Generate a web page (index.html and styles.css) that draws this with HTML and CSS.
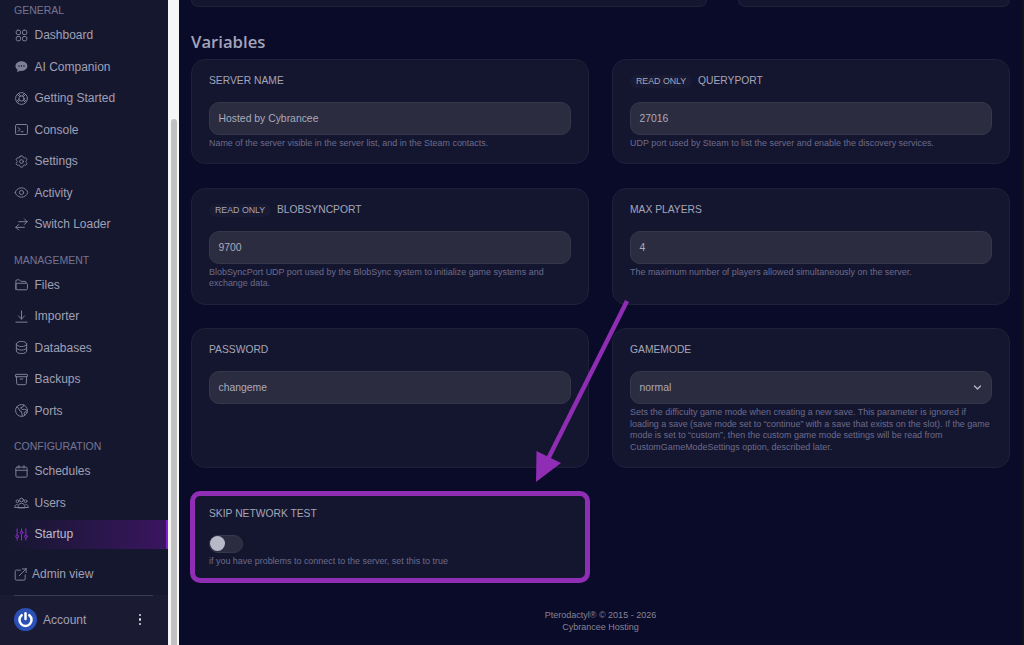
FILE: index.html
```html
<!DOCTYPE html>
<html lang="en">
<head>
    <meta charset="UTF-8">
    <meta name="viewport" content="width=device-width, initial-scale=1.0">
    <title>Startup - Cybrancee Hosting</title>
    <link rel="stylesheet" href="styles.css">
</head>
<body>
    <aside class="sidebar">
        <nav class="nav">
            <div class="nav-title">General</div>
            <div class="nav-group">
                <a class="nav-item"><svg class="icon" viewBox="0 0 24 24"><rect x="3.5" y="3.5" width="7" height="7" rx="2.6"/><rect x="13.5" y="3.5" width="7" height="7" rx="2.6"/><rect x="3.5" y="13.5" width="7" height="7" rx="2.6"/><rect x="13.5" y="13.5" width="7" height="7" rx="2.6"/></svg>Dashboard</a>
                <a class="nav-item"><svg class="icon" viewBox="0 0 24 24"><path class="fill" d="M12 3.5c5.2 0 9.5 3.4 9.5 7.8s-4.300 7.800-9.500 7.800c-.9 0-1.800-.1-2.600-.3-1.200 1-2.900 1.700-5 1.700.8-1 1.300-2.200 1.300-3.400-2.100-1.400-3.400-3.500-3.400-5.800 0-4.400 4.500-7.800 9.700-7.800Z"/><circle class="hole" cx="8" cy="11.300" r="1.200"/><circle class="hole" cx="12" cy="11.300" r="1.200"/><circle class="hole" cx="16" cy="11.300" r="1.200"/></svg>AI Companion</a>
                <a class="nav-item"><svg class="icon" viewBox="0 0 24 24"><circle cx="12" cy="12" r="9.500"/><circle cx="12" cy="12" r="4.200"/><path d="M5.300 5.300 9 9M18.700 5.300 15 9M5.300 18.700 9 15M18.700 18.700 15 15M8 4.500l2.600 3.500M16 4.500 13.400 8M4.500 16 8 13.400M19.500 16 16 13.400"/></svg>Getting Started</a>
                <a class="nav-item"><svg class="icon" viewBox="0 0 24 24"><rect x="2.500" y="4" width="19" height="16" rx="1.800"/><path d="m6.500 9 3.500 3-3.500 3M11.500 15.500h3"/></svg>Console</a>
                <a class="nav-item"><svg class="icon" viewBox="0 0 24 24"><path d="M9.594 3.940c.09-.542.56-.94 1.110-.94h2.593c.55 0 1.020.398 1.110.94l.213 1.281c.063.374.313.686.645.870.074.04.147.083.22.127.325.196.72.257 1.075.124l1.217-.456a1.125 1.125 0 0 1 1.370.49l1.296 2.247a1.125 1.125 0 0 1-.26 1.431l-1.003.827c-.293.241-.438.613-.43.992a7.723 7.723 0 0 1 0 .255c-.008.378.137.75.43.991l1.004.827c.424.35.534.955.26 1.430l-1.298 2.247a1.125 1.125 0 0 1-1.369.491l-1.217-.456c-.355-.133-.75-.072-1.076.124a6.470 6.470 0 0 1-.22.128c-.331.183-.581.495-.644.869l-.213 1.281c-.09.543-.56.94-1.110.94h-2.594c-.55 0-1.019-.398-1.110-.94l-.213-1.281c-.062-.374-.312-.686-.644-.87a6.520 6.520 0 0 1-.22-.127c-.325-.196-.72-.257-1.076-.124l-1.217.456a1.125 1.125 0 0 1-1.369-.49l-1.297-2.247a1.125 1.125 0 0 1 .26-1.431l1.004-.827c.292-.24.437-.613.43-.991a6.932 6.932 0 0 1 0-.255c.007-.38-.138-.751-.43-.992l-1.004-.827a1.125 1.125 0 0 1-.26-1.430l1.297-2.247a1.125 1.125 0 0 1 1.370-.491l1.216.456c.356.133.751.072 1.076-.124.072-.044.146-.086.22-.128.332-.183.582-.495.644-.869l.214-1.280Z"/><circle cx="12" cy="12" r="3"/></svg>Settings</a>
                <a class="nav-item"><svg class="icon" viewBox="0 0 24 24"><path d="M2.036 12.322a1.012 1.012 0 0 1 0-.639C3.423 7.510 7.360 4.500 12 4.500c4.638 0 8.573 3.007 9.963 7.178.07.207.07.431 0 .639C20.577 16.490 16.640 19.500 12 19.500c-4.638 0-8.573-3.007-9.963-7.178Z"/><circle cx="12" cy="12" r="3.400"/></svg>Activity</a>
                <a class="nav-item"><svg class="icon" viewBox="0 0 24 24"><path d="M7.500 21 3 16.500m0 0L7.500 12M3 16.500h13.500m0-13.500L21 7.500m0 0L16.500 12M21 7.500H7.500"/></svg>Switch Loader</a>
            </div>
            <div class="nav-title">Management</div>
            <div class="nav-group">
                <a class="nav-item"><svg class="icon" viewBox="0 0 24 24"><path d="M3 20V6.500A2 2 0 0 1 5 4.500h3.500l2.500 2.500h6.500a2 2 0 0 1 2 2"/><path d="M3 12a2 2 0 0 1 2-2h14.500a2 2 0 0 1 2 2v6.500a2 2 0 0 1-2 2H5a2 2 0 0 1-2-2Z"/></svg>Files</a>
                <a class="nav-item"><svg class="icon" viewBox="0 0 24 24"><path d="M12 3v13m0 0-5-5m5 5 5-5M3 21h18"/></svg>Importer</a>
                <a class="nav-item"><svg class="icon" viewBox="0 0 24 24"><path d="M20.250 6.375c0 2.278-3.694 4.125-8.250 4.125S3.750 8.653 3.750 6.375m16.500 0c0-2.278-3.694-4.125-8.250-4.125S3.750 4.097 3.750 6.375m16.500 0v11.250c0 2.278-3.694 4.125-8.250 4.125s-8.250-1.847-8.250-4.125V6.375m16.500 5.625c0 2.278-3.694 4.125-8.250 4.125S3.750 14.278 3.750 12"/></svg>Databases</a>
                <a class="nav-item"><svg class="icon" viewBox="0 0 24 24"><path d="m20.250 7.500-.625 10.632a2.250 2.250 0 0 1-2.247 2.118H6.622a2.250 2.250 0 0 1-2.247-2.118L3.750 7.500M10 11.250h4M3.375 7.500h17.250c.621 0 1.125-.504 1.125-1.125v-1.500c0-.621-.504-1.125-1.125-1.125H3.375c-.621 0-1.125.504-1.125 1.125v1.500c0 .621.504 1.125 1.125 1.125Z"/></svg>Backups</a>
                <a class="nav-item"><svg class="icon" viewBox="0 0 24 24"><circle cx="12" cy="12" r="9.500"/><path d="M4.500 6.500 8 9l1 3.500 3 1 .5 3.500 1 4.300M15.500 3.200l-1.500 3.300-3.500 1 2.500 3 3.500-.5 4 1.500M21 15l-3.500-1-1.500 2 1 3.500"/></svg>Ports</a>
            </div>
            <div class="nav-title">Configuration</div>
            <div class="nav-group">
                <a class="nav-item"><svg class="icon" viewBox="0 0 24 24"><rect x="3" y="5" width="18" height="16" rx="2"/><path d="M3 10h18M8 2.500V6.500M16 2.500V6.500"/></svg>Schedules</a>
                <a class="nav-item"><svg class="icon" viewBox="0 0 24 24"><circle cx="12" cy="8" r="3"/><circle cx="5.500" cy="10" r="2.200"/><circle cx="18.500" cy="10" r="2.200"/><path d="M6.500 20v-1.500c0-3 2.400-5.200 5.500-5.200s5.500 2.200 5.500 5.200V20ZM1.500 20v-1.500c0-2 1.500-3.500 3.500-3.500M22.500 20v-1.500c0-2-1.500-3.500-3.500-3.500M1.500 20h21"/></svg>Users</a>
                <a class="nav-item active"><svg class="icon" viewBox="0 0 24 24"><path d="M5 3v9M5 18v3M12 3v3M12 12v9M19 3v9M19 18v3"/><circle cx="5" cy="15" r="2.200"/><circle cx="12" cy="9" r="2.200"/><circle cx="19" cy="15" r="2.200"/></svg>Startup</a>
            </div>
        </nav>
        <a class="admin-link"><svg class="icon" viewBox="0 0 24 24"><path d="M12 5H5.500A2 2 0 0 0 3.500 7v12a2 2 0 0 0 2 2h12a2 2 0 0 0 2-2v-6.500M10 14 21 3m0 0h-6m6 0v6"/></svg>Admin view</a>
        <div class="account">
            <svg class="avatar" viewBox="0 0 24 24"><circle class="avatar-bg" cx="12" cy="12" r="12"/><path class="avatar-ring" d="M8 7.500a6.300 6.300 0 1 0 8 0"/><path class="avatar-ring" d="M12 5.500v6"/></svg>
            <span class="account-name">Account</span>
            <span class="dots"><i></i><i></i><i></i></span>
        </div>
    </aside>

    <div class="scrollbar"><div class="thumb"></div></div>

    <main class="main">
        <div class="top-row">
            <div class="top-card wide"></div>
            <div class="top-card"></div>
        </div>

        <h2 class="heading">Variables</h2>

        <div class="grid">
            <section class="card">
                <div class="label">Server Name</div>
                <div class="field">Hosted by Cybrancee</div>
                <p class="help">Name of the server visible in the server list, and in the Steam contacts.</p>
            </section>
            <section class="card">
                <div class="label"><span class="badge">Read Only</span>QUERYPORT</div>
                <div class="field">27016</div>
                <p class="help">UDP port used by Steam to list the server and enable the discovery services.</p>
            </section>
            <section class="card">
                <div class="label"><span class="badge">Read Only</span>BLOBSYNCPORT</div>
                <div class="field">9700</div>
                <p class="help">BlobSyncPort UDP port used by the BlobSync system to initialize game systems and exchange data.</p>
            </section>
            <section class="card">
                <div class="label">Max Players</div>
                <div class="field">4</div>
                <p class="help">The maximum number of players allowed simultaneously on the server.</p>
            </section>
            <section class="card">
                <div class="label">Password</div>
                <div class="field">changeme</div>
            </section>
            <section class="card">
                <div class="label">Gamemode</div>
                <div class="field select">normal
                    <svg class="chevron" viewBox="0 0 12 12"><path d="m2 4 4 4 4-4"/></svg>
                </div>
                <p class="help">Sets the difficulty game mode when creating a new save. This parameter is ignored if loading a save (save mode set to “continue” with a save that exists on the slot). If the game mode is set to “custom”, then the custom game mode settings will be read from CustomGameModeSettings option, described later.</p>
            </section>
            <section class="card marked">
                <div class="label">Skip Network Test</div>
                <div class="toggle"><span class="knob"></span></div>
                <p class="help">if you have problems to connect to the server, set this to true</p>
            </section>
        </div>

        <footer class="footer">
            <div>Pterodactyl® © 2015 - 2026</div>
            <div>Cybrancee Hosting</div>
        </footer>
    </main>

    <svg class="arrow" viewBox="0 0 1024 645"><path class="arrow-line" d="M627 301 547 461"/><path class="arrow-head" d="M536 482 536.500 451 561 463Z"/></svg>
</body>
</html>
```

FILE: styles.css
```css
* {
    box-sizing: border-box;
}
html, body {
    height: 100%;
}
body {
    margin: 0;
    display: flex;
    height: 645px;
    overflow: hidden;
    background-color: #0a0a29;
    font-family: "Liberation Sans", Arial, sans-serif;
}

/* sidebar */
.sidebar {
    width: 168px;
    flex-shrink: 0;
    display: flex;
    flex-direction: column;
    background-color: #15172f;
    color: #a0a0b4;
    font-size: 12px;
}
.nav {
    padding-top: 1px;
}
.nav-title {
    height: 18px;
    line-height: 18px;
    margin-bottom: 1.5px;
    padding-left: 14px;
    font-size: 10.5px;
    text-transform: uppercase;
    color: #757591;
}
.nav-group {
    display: flex;
    flex-direction: column;
    gap: 2.5px;
    margin-bottom: 12px;
}
.nav-group:last-child {
    margin-bottom: 11px;
}
.nav-item {
    height: 29px;
    display: flex;
    align-items: center;
    gap: 5.5px;
    padding-left: 14px;
}
.nav-item.active {
    color: #bdbdcc;
    background: linear-gradient(90deg, rgba(58, 21, 96, 0) 5%, #3a1560 100%);
    border-right: 2px solid #7e22ce;
}
.nav-item.active .icon {
    stroke: #8b2fc9;
}
.icon {
    width: 15px;
    height: 15px;
    flex-shrink: 0;
    fill: none;
    stroke: #7e7e98;
    stroke-width: 1.6;
    stroke-linecap: round;
    stroke-linejoin: round;
}
.icon .fill {
    fill: #7e7e98;
    stroke: none;
}
.icon .hole {
    fill: #15172f;
    stroke: none;
}
.admin-link {
    display: flex;
    align-items: center;
    gap: 4px;
    padding-left: 13px;
    height: 29px;
}
.account {
    display: flex;
    align-items: center;
    height: 50px;
    margin-top: auto;
    padding: 0 14px 1px;
    position: relative;
    background-color: #1a1b33;
    font-size: 12px;
}
.account::before {
    content: "";
    position: absolute;
    top: 0;
    left: 14px;
    width: 139px;
    height: 1px;
    background-color: #3a3a52;
}
.avatar {
    width: 23px;
    height: 23px;
    flex-shrink: 0;
}
.avatar-bg {
    fill: #2a4fb5;
}
.avatar-ring {
    fill: none;
    stroke: #fff;
    stroke-width: 2.6;
    stroke-linecap: round;
}
.account-name {
    margin-left: 6px;
}
.dots {
    display: flex;
    flex-direction: column;
    gap: 2px;
    margin-left: auto;
    padding-right: 13px;
}
.dots i {
    width: 2.5px;
    height: 2.5px;
    border-radius: 50%;
    background-color: #d8d8e2;
}

.scrollbar {
    width: 10.5px;
    flex-shrink: 0;
    display: flex;
    padding: 119px 2px 0 3px;
    background-color: #f6f6f6;
}
.thumb {
    flex: 1;
    background-color: #c1c1c1;
    border-radius: 3px 3px 0 0;
}

/* content */
.main {
    flex: 1;
    min-width: 0;
    padding: 0 12px 0 12.5px;
    border-right: 2px solid #12121f;
}
.top-row {
    display: flex;
    gap: 31px;
}
.top-card {
    width: 272px;
    height: 6.5px;
    background-color: #14162f;
    border: 1px solid #1f2138;
    border-top: 0;
    border-radius: 0 0 12px 12px;
}
.top-card.wide {
    width: 516px;
}
.heading {
    margin: 23px 0 5px;
    height: 24px;
    line-height: 24px;
    font-family: "Open Sans", sans-serif;
    font-size: 16.7px;
    font-weight: 600;
    color: #a4a4b8;
}
.grid {
    display: grid;
    grid-template-columns: 398px 398px;
    gap: 23.5px 23px;
    align-items: stretch;
}
.card {
    padding: 14px 17px 14px;
    background-color: #14162f;
    border: 1px solid #1f2138;
    border-radius: 14px;
}
.card.marked {
    position: relative;
}
.card.marked::after {
    content: "";
    position: absolute;
    top: -2px;
    left: -2px;
    right: -2px;
    bottom: -2px;
    border: 5.5px solid #8f2db5;
    border-radius: 10px;
}
.label {
    height: 14px;
    line-height: 14px;
    margin-bottom: 14px;
    font-size: 10.3px;
    text-transform: uppercase;
    color: #a5a5b8;
    display: flex;
    align-items: center;
}
.badge {
    width: 62px;
    height: 13px;
    line-height: 13px;
    margin: 2px 6px 0 0;
    padding-left: 6px;
    border-radius: 7px;
    background-color: #191a33;
    font-size: 8.8px;
    white-space: nowrap;
}
.field {
    height: 33px;
    display: flex;
    align-items: center;
    padding: 0 8.5px;
    background-color: #2b2c40;
    border: 1px solid #36374b;
    border-radius: 10px;
    font-size: 10.4px;
    color: #aaaabb;
}
.select {
    justify-content: space-between;
}
.chevron {
    width: 9px;
    height: 9px;
    margin-right: 1px;
    fill: none;
    stroke: #b5b5c4;
    stroke-width: 1.8;
    stroke-linecap: round;
    stroke-linejoin: round;
}
.help {
    margin: 3px 0 0;
    font-size: 8.95px;
    line-height: 11.5px;
    color: #6c6b8c;
}
.toggle {
    width: 34px;
    height: 18px;
    padding: 0.5px 0;
    background-color: #2b2c40;
    border: 1px solid #36374b;
    border-radius: 9px;
}
.knob {
    display: block;
    width: 15px;
    height: 15px;
    border-radius: 50%;
    background-color: #b9b8c8;
}
.footer {
    margin-top: 28px;
    text-align: center;
    font-size: 9px;
    line-height: 11.5px;
    color: #858594;
}

/* annotation on top of the screenshot */
.arrow {
    position: absolute;
    top: 0;
    left: 0;
    width: 1024px;
    height: 645px;
    pointer-events: none;
}
.arrow-line {
    fill: none;
    stroke: #8f2db5;
    stroke-width: 4.5;
}
.arrow-head {
    fill: #8f2db5;
}
```
